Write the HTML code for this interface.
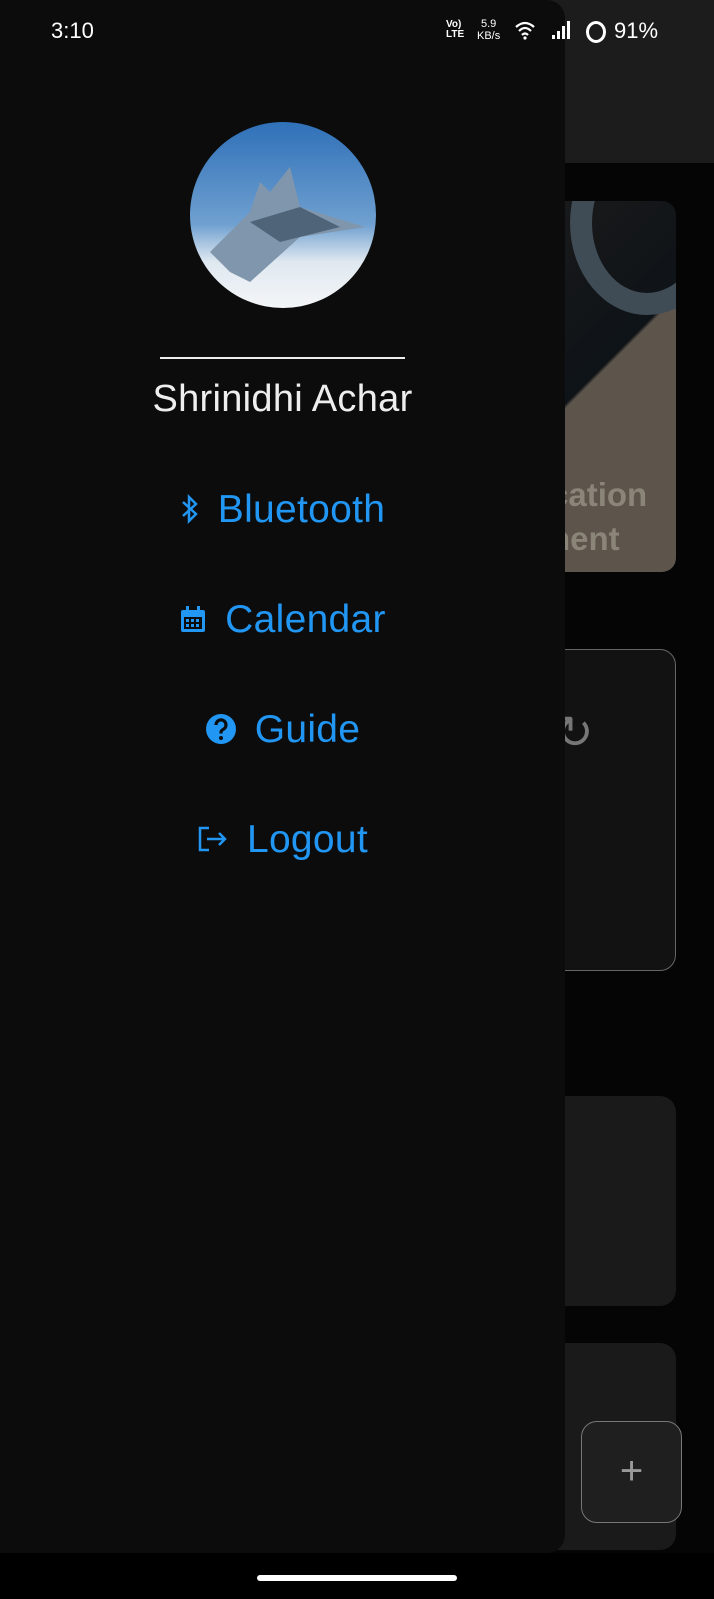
<!DOCTYPE html>
<html><head><style>
body{margin:0;width:714px;height:1599px;background:#050505;position:relative;overflow:hidden;font-family:"Liberation Sans",sans-serif}
.abs{position:absolute}
.item{position:absolute;left:0;width:565px;text-align:center;color:#2196f3;font-size:39px;line-height:44px;letter-spacing:0.3px}
.item svg{vertical-align:middle;margin-right:18px;position:relative;top:-3px}
</style></head><body>
<div class="abs" style="left:0;top:0;width:714px;height:163px;background:#1c1c1c"></div>
<div class="abs" style="left:540px;top:201px;width:136px;height:371px;border-radius:14px;background:linear-gradient(135deg,#1a1a1a 0%,#0e1318 45%,#5d554b 46%,#5d554b 100%);overflow:hidden">
 <div class="abs" style="left:30px;top:-70px;width:110px;height:140px;border-radius:50%;border:22px solid #3f4b55"></div>
 <div class="abs" style="left:10px;top:272px;color:#8a8479;font-size:33px;font-weight:bold;line-height:44px">cation<br>nent</div>
</div>
<div class="abs" style="left:520px;top:649px;width:154px;height:320px;border:1.5px solid #666;border-radius:16px;background:#121212"></div>
<div class="abs" style="left:555px;top:705px;color:#777;font-size:46px">↻</div>
<div class="abs" style="left:520px;top:1096px;width:156px;height:210px;border-radius:16px;background:#1a1a1a"></div>
<div class="abs" style="left:520px;top:1343px;width:156px;height:207px;border-radius:16px;background:#1a1a1a"></div>
<div class="abs" style="left:581px;top:1421px;width:99px;height:100px;border:1.5px solid #777;border-radius:16px;background:#1f1f1f;color:#999;font-size:40px;text-align:center;line-height:98px">+</div>
<div class="abs" style="left:0;top:1553px;width:714px;height:46px;background:#000"></div>
<div class="abs" style="left:257px;top:1575px;width:200px;height:6px;border-radius:3px;background:#fff"></div>

<div class="abs" style="left:0;top:0;width:565px;height:1553px;background:#0c0c0c;border-radius:0 18px 18px 0"></div>
<div class="abs" style="left:51px;top:18px;color:#fff;font-size:22px">3:10</div>
<div class="abs" style="left:446px;top:20px;color:#fff;font-size:10px;line-height:10px;font-weight:bold">Vo)<br>LTE</div>
<div class="abs" style="left:477px;top:18px;color:#fff;font-size:11px;line-height:12px;text-align:center">5.9<br>KB/s</div>
<svg class="abs" style="left:514px;top:20px" width="22" height="20" viewBox="0 0 22 20"><path d="M2 7 Q11 -1 20 7 M5 11 Q11 5 17 11 M8 15 Q11 12 14 15" stroke="#fff" stroke-width="2.2" fill="none"/><circle cx="11" cy="18" r="1.6" fill="#fff"/></svg>
<svg class="abs" style="left:551px;top:20px" width="20" height="20" viewBox="0 0 20 20"><rect x="1" y="15" width="3" height="4" fill="#fff"/><rect x="6" y="11" width="3" height="8" fill="#fff"/><rect x="11" y="6" width="3" height="13" fill="#fff"/><rect x="16" y="1" width="3" height="18" fill="#fff"/></svg>
<div class="abs" style="left:586px;top:21px;width:14px;height:16px;border:3px solid #fff;border-radius:50%"></div>
<div class="abs" style="left:614px;top:18px;color:#fff;font-size:22px">91%</div>

<div class="abs" style="left:190px;top:122px;width:186px;height:186px;border-radius:50%;overflow:hidden;background:linear-gradient(#2f70b8 0%,#6fa0d0 55%,#dfe8f0 75%,#f4f6f8 100%)">
 <svg width="186" height="186" style="position:absolute;left:0;top:0"><polygon points="20,130 60,90 70,60 80,70 100,45 110,85 175,105 110,115 60,160 40,150" fill="#7f96ad"/><polygon points="60,100 110,85 150,105 90,120" fill="#4f6478"/></svg>
</div>
<div class="abs" style="left:160px;top:357px;width:245px;height:2px;background:#eee"></div>
<div class="abs" style="left:0;top:378px;width:565px;text-align:center;color:#eee;font-size:38px;letter-spacing:0.3px">Shrinidhi Achar</div>

<div class="item" style="top:488px"><svg width="20" height="30" viewBox="0 0 20 30"><path d="M3 8 L16 20 L9 27 L9 3 L16 10 L3 22" stroke="#2196f3" stroke-width="2.5" fill="none"/></svg>Bluetooth</div>
<div class="item" style="top:598px"><svg width="28" height="30" viewBox="0 0 28 30"><rect x="2" y="6" width="24" height="22" rx="2" fill="#2196f3"/><rect x="7" y="2" width="3" height="6" fill="#2196f3"/><rect x="18" y="2" width="3" height="6" fill="#2196f3"/><rect x="5" y="13" width="18" height="12" fill="#0c0c0c"/><g fill="#2196f3"><rect x="7" y="15" width="3" height="3"/><rect x="12" y="15" width="3" height="3"/><rect x="17" y="15" width="3" height="3"/><rect x="7" y="20" width="3" height="3"/><rect x="12" y="20" width="3" height="3"/><rect x="17" y="20" width="3" height="3"/></g></svg>Calendar</div>
<div class="item" style="top:708px"><svg width="32" height="32" viewBox="0 0 32 32"><circle cx="16" cy="16" r="15" fill="#2196f3"/><path d="M11 12 a5 5 0 1 1 7 4.5 c-2 1 -2 2 -2 4" stroke="#0c0c0c" stroke-width="3.2" fill="none"/><circle cx="16" cy="25" r="2" fill="#0c0c0c"/></svg>Guide</div>
<div class="item" style="top:818px"><svg width="32" height="28" viewBox="0 0 32 28"><path d="M12 3 H3 V25 H12" stroke="#2196f3" stroke-width="2.5" fill="none"/><path d="M10 14 H28 M22 8 L28 14 L22 20" stroke="#2196f3" stroke-width="2.5" fill="none"/></svg>Logout</div>
</body></html>
